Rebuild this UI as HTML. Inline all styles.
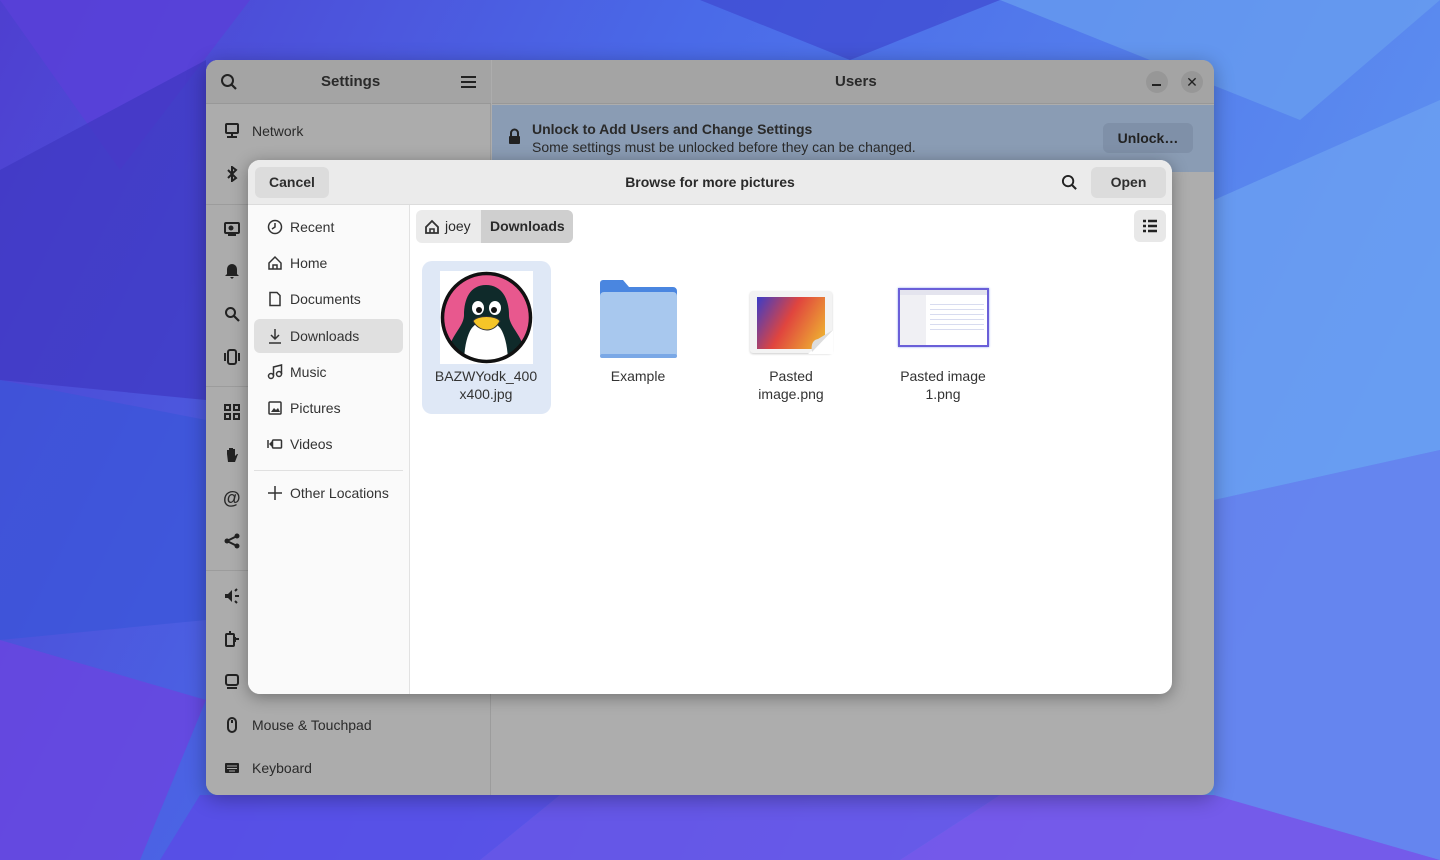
<!DOCTYPE html>
<html><head><meta charset="utf-8"><style>
*{box-sizing:border-box;margin:0;padding:0}
body{width:1440px;height:860px;overflow:hidden;font-family:"Liberation Sans","DejaVu Sans",sans-serif;position:relative;background:#5b5ee0}
.bg{position:absolute;inset:0}
.win{position:absolute;left:206px;top:60px;width:1008px;height:735px;border-radius:12px;overflow:hidden;background:#adadad;box-shadow:0 4px 20px rgba(0,0,0,.3)}
.sb{position:absolute;left:0;top:0;width:285px;height:100%;background:#acacac;border-right:1px solid #9c9c9c}
.hd{position:absolute;top:0;height:44px;background:#a4a4a4;border-bottom:1px solid #989898}
.t{position:absolute;font-size:14px;color:#2a2a2a}
.b{font-weight:bold}
.ic{position:absolute;left:18px;width:16px;height:16px}
.sep{position:absolute;left:0;width:285px;height:1px;background:#9c9c9c}
.dlg{position:absolute;left:248px;top:160px;width:924px;height:534px;border-radius:12px;overflow:hidden;background:#fff;box-shadow:0 3px 16px rgba(0,0,0,.35)}
.dh{position:absolute;left:0;top:0;width:100%;height:45px;background:#ebebeb;border-bottom:1px solid #dcdcdc}
.btn{position:absolute;background:#dcdcdc;border-radius:6px;font-weight:bold;font-size:14px;color:#2e2e2e;text-align:center}
.ds{position:absolute;left:0;top:45px;width:162px;height:489px;background:#fafafa;border-right:1px solid #e2e2e2}
.it{position:absolute;left:6px;width:149px;height:34px;border-radius:6px;font-size:14px;color:#333;line-height:34px;padding-left:36px}
.it svg{position:absolute;left:13px;top:9px}
.cap{position:absolute;font-size:14px;color:#333;text-align:center;line-height:18px;width:140px}
</style></head><body>
<svg class="bg" width="1440" height="860">
<defs><linearGradient id="g" x1="0" y1="0" x2="1" y2="0.3"><stop offset="0" stop-color="#4e3fd0"/><stop offset=".45" stop-color="#4a6ae8"/><stop offset="1" stop-color="#5d8ff0"/></linearGradient></defs>
<rect width="1440" height="860" fill="url(#g)"/>
<polygon points="0,0 250,0 120,170" fill="#5a40d8" opacity=".8"/>
<polygon points="0,170 206,60 206,400 0,380" fill="#3e38c2" opacity=".7"/>
<polygon points="0,380 206,420 206,620 0,640" fill="#3a55d8" opacity=".7"/>
<polygon points="0,640 206,700 140,860 0,860" fill="#6a45e0" opacity=".8"/>
<polygon points="200,795 560,795 480,860 160,860" fill="#5a4ae6" opacity=".8"/>
<polygon points="560,795 1000,795 900,860 480,860" fill="#6a4fe6" opacity=".8"/>
<polygon points="1000,795 1214,795 1440,860 900,860" fill="#7a4de8" opacity=".8"/>
<polygon points="1214,200 1440,100 1440,450 1214,500" fill="#6ea2f2" opacity=".7"/>
<polygon points="1214,500 1440,450 1440,860 1214,795" fill="#6a80ee" opacity=".7"/>
<polygon points="700,0 1000,0 850,60" fill="#3f48d0" opacity=".7"/>
<polygon points="1000,0 1440,0 1300,120" fill="#6aa0f0" opacity=".7"/>
</svg>
<div class="win">
 <div class="sb">
  <div class="hd" style="left:0;width:285px"></div>
  <svg style="position:absolute;left:14px;top:13px" width="18" height="18" viewBox="0 0 18 18"><circle cx="7.5" cy="7.5" r="5.5" fill="none" stroke="#222" stroke-width="2"/><path d="M11.5 11.5 16 16" stroke="#222" stroke-width="2.2"/></svg>
  <div class="t b" style="left:115px;top:13px;font-size:15px">Settings</div>
  <svg style="position:absolute;left:255px;top:15px" width="15" height="14"><path d="M0 2h15M0 7h15M0 12h15" stroke="#222" stroke-width="2"/></svg>
  <svg class="ic" style="top:63px" viewBox="0 0 16 16"><rect x="2" y="1" width="12" height="9" rx="1" fill="none" stroke="#222" stroke-width="2"/><path d="M8 10v3M3 14h10" stroke="#222" stroke-width="2"/></svg>
  <div class="t" style="left:46px;top:63px">Network</div>
  <svg class="ic" style="top:106px" viewBox="0 0 16 16"><path d="M4 4l8 8-4 3V1l4 3-8 8" fill="none" stroke="#222" stroke-width="2"/></svg>
  <div class="sep" style="top:144px"></div>
  <svg class="ic" style="top:160px" viewBox="0 0 16 16"><rect x="1" y="3" width="14" height="10" rx="1" fill="none" stroke="#222" stroke-width="2"/><circle cx="7" cy="8" r="2.5" fill="#222"/><path d="M4 15h8" stroke="#222" stroke-width="2"/></svg>
  <svg class="ic" style="top:203px" viewBox="0 0 16 16"><path d="M8 1a5 5 0 0 1 5 5v5l2 2H1l2-2V6a5 5 0 0 1 5-5zM6 14h4l-2 2z" fill="#222"/></svg>
  <svg class="ic" style="top:246px" viewBox="0 0 16 16"><circle cx="6.5" cy="6.5" r="4.5" fill="none" stroke="#222" stroke-width="2"/><path d="M10 10l5 5" stroke="#222" stroke-width="2.2"/></svg>
  <svg class="ic" style="top:289px" viewBox="0 0 16 16"><rect x="4" y="1" width="8" height="14" rx="2" fill="none" stroke="#222" stroke-width="2"/><path d="M1 4v8M15 4v8" stroke="#222" stroke-width="2"/></svg>
  <div class="sep" style="top:326px"></div>
  <svg class="ic" style="top:344px" viewBox="0 0 16 16"><g fill="none" stroke="#222" stroke-width="2"><rect x="1" y="1" width="5" height="5"/><rect x="10" y="1" width="5" height="5"/><rect x="1" y="10" width="5" height="5"/><rect x="10" y="10" width="5" height="5"/></g></svg>
  <svg class="ic" style="top:387px" viewBox="0 0 16 16"><path d="M3 7V3h2v4V1h2v6V1h2v6V2h2v7l2-2h1l-3 8H4z" fill="#222"/></svg>
  <div class="t b" style="left:17px;top:428px;font-size:18px">@</div>
  <svg class="ic" style="top:473px" viewBox="0 0 16 16"><circle cx="3" cy="8" r="2.5" fill="#222"/><circle cx="13" cy="3" r="2.5" fill="#222"/><circle cx="13" cy="13" r="2.5" fill="#222"/><path d="M3 8l10-5M3 8l10 5" stroke="#222" stroke-width="2"/></svg>
  <div class="sep" style="top:510px"></div>
  <svg class="ic" style="top:528px" viewBox="0 0 16 16"><path d="M1 6h3l4-4v12l-4-4H1z" fill="#222"/><path d="M11 3l2-2M11 13l2 2M11 8h4" stroke="#222" stroke-width="2"/></svg>
  <svg class="ic" style="top:571px" viewBox="0 0 16 16"><rect x="2" y="3" width="8" height="12" rx="1" fill="none" stroke="#222" stroke-width="2"/><path d="M5 1h2M9 8h6M11 6v5" stroke="#222" stroke-width="2"/></svg>
  <svg class="ic" style="top:614px" viewBox="0 0 16 16"><rect x="2" y="1" width="12" height="10" rx="2" fill="none" stroke="#222" stroke-width="2"/><path d="M3 14h10" stroke="#222" stroke-width="2"/></svg>
  <svg class="ic" style="top:657px" viewBox="0 0 16 16"><rect x="4" y="1" width="8" height="14" rx="4" fill="none" stroke="#222" stroke-width="2"/><path d="M8 3v3" stroke="#222" stroke-width="2"/></svg>
  <div class="t" style="left:46px;top:657px">Mouse &amp; Touchpad</div>
  <svg class="ic" style="top:700px" viewBox="0 0 16 16"><rect x="1" y="3" width="14" height="10" rx="1" fill="#222"/><path d="M3 6h10M3 8.5h10M5 11h6" stroke="#aaa" stroke-width="1"/></svg>
  <div class="t" style="left:46px;top:700px">Keyboard</div>
 </div>
 <div class="hd" style="left:286px;width:722px"></div>
 <div class="t b" style="left:629px;top:13px;font-size:15px">Users</div>
 <div style="position:absolute;left:940px;top:11px;width:22px;height:22px;border-radius:50%;background:#979797"></div>
 <div style="position:absolute;left:946px;top:24px;width:9px;height:2px;background:#222"></div>
 <div style="position:absolute;left:975px;top:11px;width:22px;height:22px;border-radius:50%;background:#979797;font-size:14px;font-weight:bold;text-align:center;line-height:22px;color:#222">✕</div>
 <div style="position:absolute;left:286px;top:45px;width:722px;height:67px;background:#8a9cb4"></div>
 <svg style="position:absolute;left:302px;top:68px" width="13" height="17"><path d="M3 8V5a3.5 3.5 0 0 1 7 0v3" fill="none" stroke="#222" stroke-width="2"/><rect x="1" y="8" width="11" height="8" rx="1" fill="#222"/></svg>
 <div class="t b" style="left:326px;top:61px">Unlock to Add Users and Change Settings</div>
 <div class="t" style="left:326px;top:79px">Some settings must be unlocked before they can be changed.</div>
 <div style="position:absolute;left:897px;top:63px;width:90px;height:30px;border-radius:6px;background:#7f90a8;font-weight:bold;font-size:14px;color:#222;text-align:center;line-height:30px">Unlock…</div>
</div>
<div class="dlg">
 <div class="dh"></div>
 <div class="btn" style="left:7px;top:7px;width:74px;height:31px;line-height:31px">Cancel</div>
 <div class="t b" style="left:0;width:924px;text-align:center;top:14px">Browse for more pictures</div>
 <svg style="position:absolute;left:813px;top:14px" width="17" height="17" viewBox="0 0 18 18"><circle cx="7.5" cy="7.5" r="5.5" fill="none" stroke="#222" stroke-width="2"/><path d="M11.5 11.5 16 16" stroke="#222" stroke-width="2.2"/></svg>
 <div class="btn" style="left:843px;top:7px;width:75px;height:31px;line-height:31px">Open</div>
 <div class="ds">
  <div class="it" style="top:5px"><svg width="16" height="16"><circle cx="8" cy="8" r="6.5" fill="none" stroke="#333" stroke-width="1.5"/><path d="M8 4v4l-3 2" fill="none" stroke="#333" stroke-width="1.5"/></svg>Recent</div>
  <div class="it" style="top:41px"><svg width="16" height="16"><path d="M2 8 8 2l6 6v6H2z" fill="none" stroke="#333" stroke-width="1.5"/><path d="M6 14v-4h4v4" fill="none" stroke="#333" stroke-width="1.5"/></svg>Home</div>
  <div class="it" style="top:77px"><svg width="16" height="16"><path d="M3 1.5h7l3 3V14.5H3z" fill="none" stroke="#333" stroke-width="1.5"/></svg>Documents</div>
  <div class="it" style="top:114px;background:#e0e0e0"><svg width="16" height="16"><path d="M8 1v10M4 7l4 4 4-4M2 15h12" fill="none" stroke="#333" stroke-width="1.5"/></svg>Downloads</div>
  <div class="it" style="top:150px"><svg width="16" height="16"><circle cx="4" cy="12" r="2.5" fill="none" stroke="#333" stroke-width="1.5"/><circle cx="12" cy="10" r="2.5" fill="none" stroke="#333" stroke-width="1.5"/><path d="M6.5 12V3l8-2v9" fill="none" stroke="#333" stroke-width="1.5"/></svg>Music</div>
  <div class="it" style="top:186px"><svg width="16" height="16"><rect x="2" y="2" width="12" height="12" rx="1" fill="none" stroke="#333" stroke-width="1.5"/><path d="M4 12l3-4 2 2 2-2 2 4z" fill="#333"/></svg>Pictures</div>
  <div class="it" style="top:222px"><svg width="16" height="16"><path d="M1 4v8" stroke="#333" stroke-width="1.5"/><path d="M2 8l3-3v6z" fill="#333"/><rect x="5.5" y="4" width="9" height="8" rx="1" fill="none" stroke="#333" stroke-width="1.5"/></svg>Videos</div>
  <div style="position:absolute;left:6px;top:265px;width:149px;height:1px;background:#e0e0e0"></div>
  <div class="it" style="top:271px"><svg width="16" height="16"><path d="M8 1v14M1 8h14" stroke="#333" stroke-width="1.5"/></svg>Other Locations</div>
 </div>
 <div style="position:absolute;left:168px;top:50px;width:157px;height:33px;border-radius:6px;background:#ebebeb;overflow:hidden">
  <svg style="position:absolute;left:8px;top:9px" width="16" height="16"><path d="M2 8 8 2l6 6v6H2z" fill="none" stroke="#333" stroke-width="1.8"/><path d="M6 14v-4h4v4" fill="none" stroke="#333" stroke-width="1.6"/></svg>
  <div class="t" style="left:29px;top:8px">joey</div>
  <div style="position:absolute;left:65px;top:0;width:92px;height:33px;background:#cfcfcf"></div>
  <div class="t b" style="left:74px;top:8px">Downloads</div>
 </div>
 <div style="position:absolute;left:886px;top:50px;width:32px;height:32px;border-radius:6px;background:#e8e8e8"></div>
 <svg style="position:absolute;left:895px;top:59px" width="14" height="14"><path d="M0 2h3M0 7h3M0 12h3M5 2h9M5 7h9M5 12h9" stroke="#222" stroke-width="2.4"/></svg>
 <div style="position:absolute;left:174px;top:101px;width:129px;height:153px;border-radius:10px;background:#dfe8f6"></div>
 <div style="position:absolute;left:192px;top:111px;width:93px;height:93px;background:#fff"></div>
 <svg style="position:absolute;left:192px;top:111px" width="93" height="93" viewBox="0 0 93 93">
  <defs><clipPath id="c"><circle cx="46.5" cy="46.5" r="44"/></clipPath></defs>
  <circle cx="46.5" cy="46.5" r="44" fill="#e8588e"/>
  <g clip-path="url(#c)"><path d="M46 14c-16 0-22 14-22 30 0 10-10 18-14 30v19h73V74c-4-12-14-20-14-30 0-16-7-30-23-30z" fill="#0f2a2a"/><path d="M30 60c4-8 12-10 16-10s12 2 16 10c4 8 6 20 6 33H24c0-13 2-25 6-33z" fill="#fff"/></g>
  <ellipse cx="38" cy="37" rx="6" ry="7" fill="#fff"/><ellipse cx="55" cy="37" rx="6" ry="7" fill="#fff"/>
  <circle cx="39" cy="39" r="3" fill="#111"/><circle cx="54" cy="39" r="3" fill="#111"/>
  <path d="M33 50c4-6 23-6 27 0-3 6-8 9-13 9s-11-3-14-9z" fill="#f5c528" stroke="#333" stroke-width="1"/>
  <circle cx="46.5" cy="46.5" r="44" fill="none" stroke="#111" stroke-width="3.5"/>
 </svg>
 <div class="cap" style="left:168px;top:207px">BAZWYodk_400<br>x400.jpg</div>
 <svg style="position:absolute;left:352px;top:120px" width="77" height="78" viewBox="0 0 77 78"><path d="M3 0h20l6 7h44a4 4 0 0 1 4 4v60H0V3a3 3 0 0 1 3-3z" fill="#4a86e0"/><rect x="0" y="12" width="77" height="66" rx="4" fill="#a8c8ee"/><rect x="0" y="74" width="77" height="4" rx="2" fill="#7aa8e6"/></svg>
 <div class="cap" style="left:320px;top:207px">Example</div>
 <div style="position:absolute;left:502px;top:131px;width:82px;height:62px;background:#f3f3f3;border-radius:3px;box-shadow:0 1px 2px rgba(0,0,0,.2)"></div>
 <div style="position:absolute;left:509px;top:137px;width:68px;height:52px;background:linear-gradient(120deg,#3b3cc8,#e0453e 45%,#f0c030)"></div>
 <svg style="position:absolute;left:560px;top:170px" width="25" height="24"><path d="M25 0V24H0z" fill="#fff"/><path d="M25 0 4 22c-1-6 0-12 6-13z" fill="#ddd"/></svg>
 <div class="cap" style="left:473px;top:207px">Pasted<br>image.png</div>
 <div style="position:absolute;left:650px;top:128px;width:91px;height:59px;background:#fff;border:2px solid #6a5fd8;box-shadow:0 0 2px #8aa0f0"></div>
 <div style="position:absolute;left:652px;top:130px;width:87px;height:5px;background:#e4e4ee"></div>
 <div style="position:absolute;left:652px;top:135px;width:26px;height:50px;background:#f0f0f4"></div>
 <div style="position:absolute;left:682px;top:140px;width:54px;height:30px;background:repeating-linear-gradient(#fff 0 4px,#d8dcf0 4px 5px)"></div>
 <div class="cap" style="left:625px;top:207px">Pasted image<br>1.png</div>
</div>
</body></html>
